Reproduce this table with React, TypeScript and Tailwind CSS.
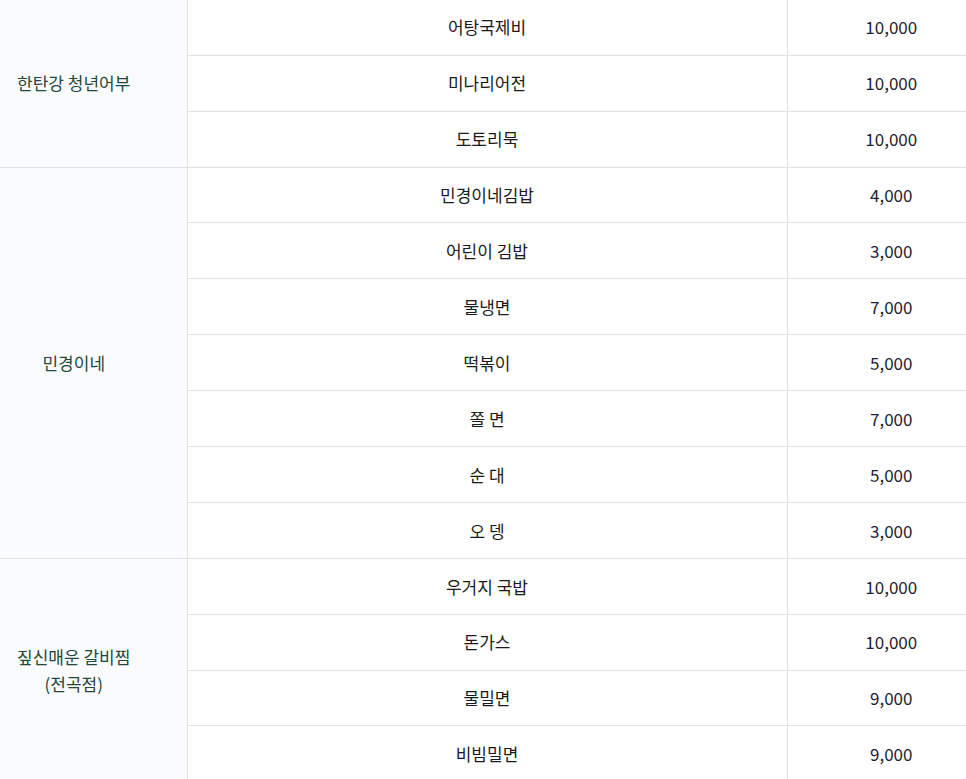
const menu = [
  {
    store: ["한탄강 청년어부"],
    items: [
      { name: "어탕국제비", price: "10,000" },
      { name: "미나리어전", price: "10,000" },
      { name: "도토리묵", price: "10,000" },
    ],
  },
  {
    store: ["민경이네"],
    items: [
      { name: "민경이네김밥", price: "4,000" },
      { name: "어린이 김밥", price: "3,000" },
      { name: "물냉면", price: "7,000" },
      { name: "떡볶이", price: "5,000" },
      { name: "쫄 면", price: "7,000" },
      { name: "순 대", price: "5,000" },
      { name: "오 뎅", price: "3,000" },
    ],
  },
  {
    store: ["짚신매운 갈비찜", "(전곡점)"],
    items: [
      { name: "우거지 국밥", price: "10,000" },
      { name: "돈가스", price: "10,000" },
      { name: "물밀면", price: "9,000" },
      { name: "비빔밀면", price: "9,000" },
    ],
  },
];

export default function App() {
  return (
    <div
      className="w-[966px] h-[779px] overflow-hidden bg-white"
      style={{ fontFamily: '"Noto Sans CJK KR", "Noto Sans", sans-serif' }}
    >
      <table className="-ml-[39px] -mt-[0.6px] border-collapse text-[17px] table-fixed w-[1034px]">
        <colgroup>
          <col className="w-[226px]" />
          <col className="w-[600px]" />
          <col className="w-[208px]" />
        </colgroup>
        <tbody>
          {menu.map((group) =>
            group.items.map((item, i) => (
              <tr key={group.store[0] + item.name}>
                {i === 0 && (
                  <td
                    rowSpan={group.items.length}
                    className="bg-[#f9fbfd] text-[#24473b] text-center align-middle border-b border-r border-[#e1e1e1] leading-[27px]"
                  >
                    {group.store.map((line) => (
                      <div key={line}>{line}</div>
                    ))}
                  </td>
                )}
                <td className="h-[55.9px] text-center align-middle text-[#1a1a1a] border-b border-r border-[#e1e1e1]">
                  {item.name}
                </td>
                <td className="h-[55.9px] text-center align-middle text-[#1f2233] border-b border-[#e1e1e1]">
                  {item.price}
                </td>
              </tr>
            ))
          )}
        </tbody>
      </table>
    </div>
  );
}
